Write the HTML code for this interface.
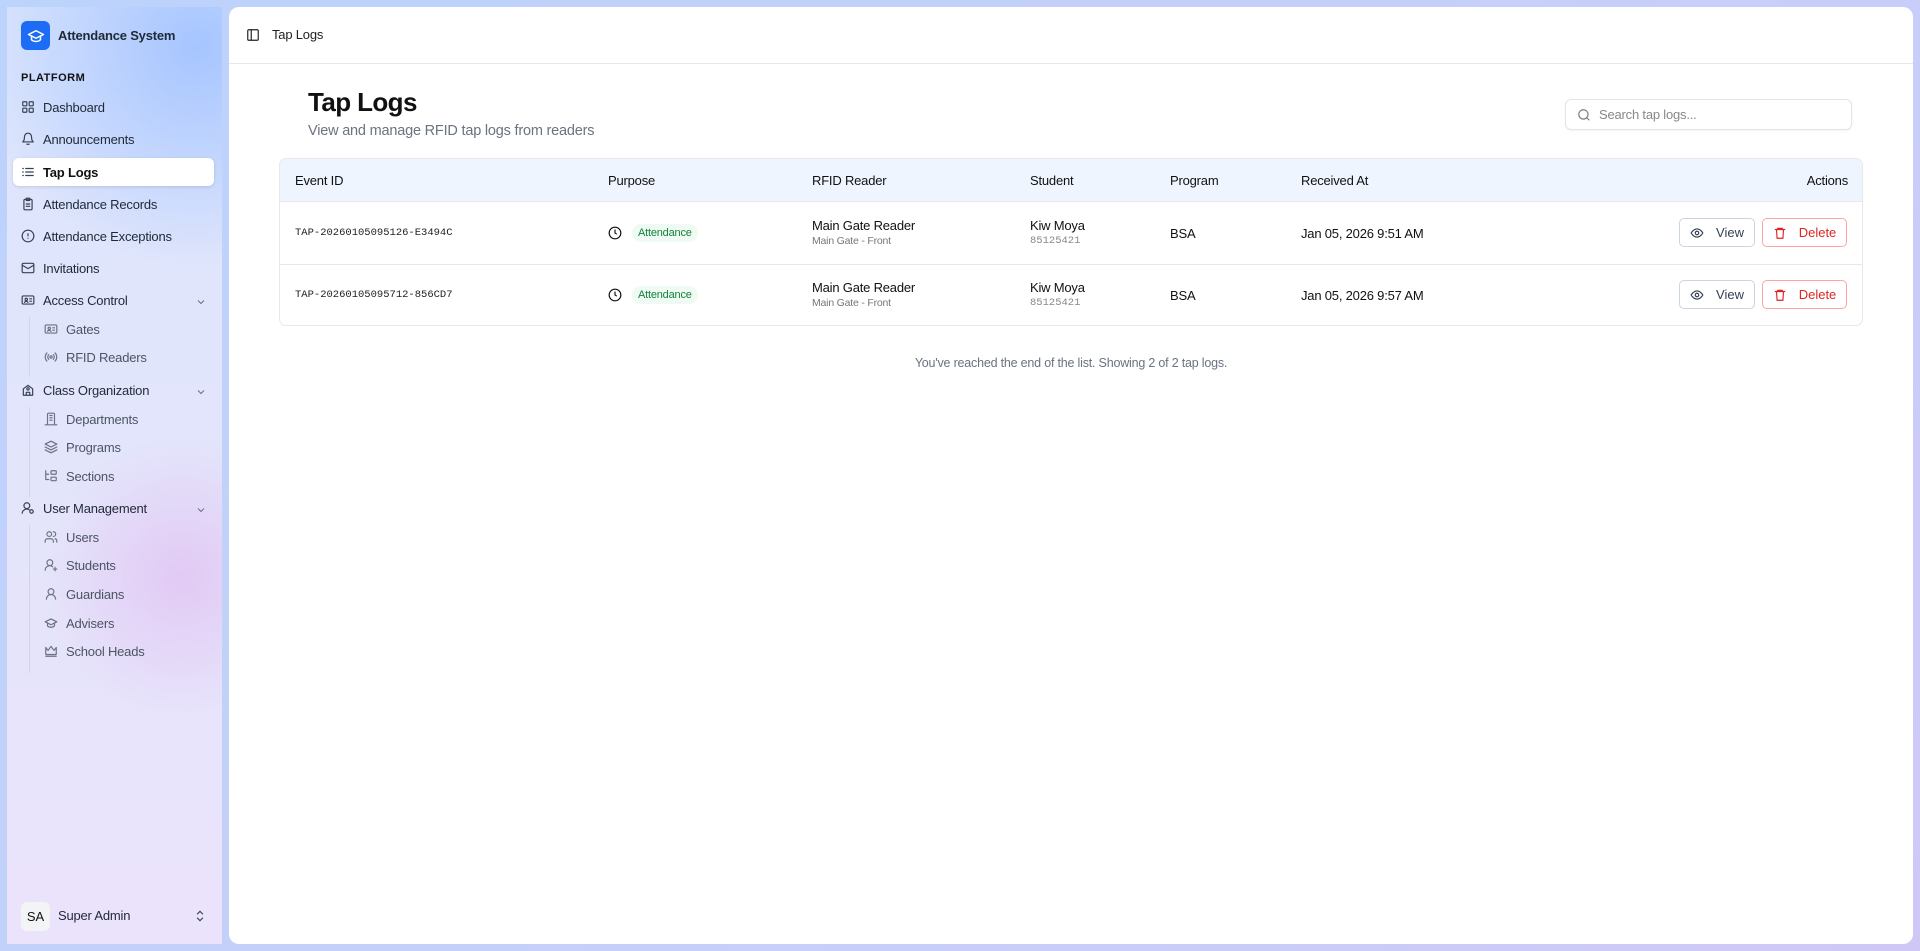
<!DOCTYPE html>
<html><head><meta charset="utf-8"><style>
*{box-sizing:border-box;margin:0;padding:0}
body{width:1920px;height:951px;overflow:hidden;font-family:"Liberation Sans",sans-serif;color:#111;background:linear-gradient(135deg,#bcd3fb 0%,#c7cffa 60%,#cfc8f6 100%);position:relative}
.sb{position:absolute;left:7px;top:7px;width:215px;height:937px;background:radial-gradient(circle at 175px 570px,rgba(226,200,244,.95),rgba(226,200,244,0) 140px),radial-gradient(circle at 190px 40px,#a6c5ff,rgba(166,197,255,0) 220px),linear-gradient(180deg,#dbe5fd 0%,#e3e5fb 50%,#ebe3fb 100%)}
.ab{position:absolute;font-size:13px;white-space:nowrap;letter-spacing:-.2px}
.it{position:absolute;left:6px;width:201px;height:28px;font-size:13px;letter-spacing:-.2px;color:#1f2937;display:flex;align-items:center;padding-left:8px}
.it svg{width:14px;height:14px;margin-right:8px;stroke:#374151;fill:none;stroke-width:2;stroke-linecap:round;stroke-linejoin:round}
.sub{position:absolute;left:30px;height:26px;font-size:13px;letter-spacing:-.2px;color:#4b5563;display:flex;align-items:center;padding-left:7px}
.sub svg{width:14px;height:14px;margin-right:8px;stroke:#6b7280;fill:none;stroke-width:2;stroke-linecap:round;stroke-linejoin:round}
.chev{position:absolute;left:188px;width:12px;height:12px;stroke:#6b7280;fill:none;stroke-width:2}
.main{position:absolute;left:229px;top:7px;width:1684px;height:937px;background:#fff;border-radius:10px}
.th{position:absolute;top:0;height:43px;line-height:43px;font-size:13px;letter-spacing:-.2px;color:#111}
.mono{font-family:"Liberation Mono",monospace;letter-spacing:0}
.btn{position:absolute;height:29px;border-radius:5px;font-size:13px;display:flex;align-items:center;justify-content:center;gap:12px;background:#fff}
</style></head><body>
<div class="sb">
  <div style="position:absolute;left:14px;top:14px;width:29px;height:29px;border-radius:6px;background:#1d6cf5;display:flex;align-items:center;justify-content:center"><svg width="18" height="18" viewBox="0 0 24 24" fill="none" stroke="#fff" stroke-width="2" stroke-linecap="round" stroke-linejoin="round"><path d="M22 10 12 5 2 10l10 5 10-5z"/><path d="M6 12v5c3 3 9 3 12 0v-5"/></svg></div>
  <div class="ab" style="left:51px;top:21px;font-weight:bold;font-size:13px;color:#1f2937">Attendance System</div>
  <div class="ab" style="left:14px;top:65px;font-size:11px;font-weight:bold;letter-spacing:.5px;color:#111">PLATFORM</div>
  <div class="it" style="top:86px"><svg viewBox="0 0 24 24"><rect x="3" y="3" width="7" height="7" rx="1"/><rect x="14" y="3" width="7" height="7" rx="1"/><rect x="3" y="14" width="7" height="7" rx="1"/><rect x="14" y="14" width="7" height="7" rx="1"/></svg>Dashboard</div>
  <div class="it" style="top:118px"><svg viewBox="0 0 24 24"><path d="M6 8a6 6 0 0 1 12 0c0 7 3 9 3 9H3s3-2 3-9"/><path d="M10 21h4"/></svg>Announcements</div>
  <div class="it" style="top:151px;background:#fff;border-radius:6px;box-shadow:0 1px 3px rgba(0,0,0,.12);font-weight:bold;color:#111"><svg viewBox="0 0 24 24"><path d="M3 6h1M3 12h1M3 18h1M8 6h13M8 12h13M8 18h13"/></svg>Tap Logs</div>
  <div class="it" style="top:183px"><svg viewBox="0 0 24 24"><rect x="5" y="4" width="14" height="18" rx="2"/><path d="M9 2h6v4H9zM9 12h6M9 16h6"/></svg>Attendance Records</div>
  <div class="it" style="top:215px"><svg viewBox="0 0 24 24"><circle cx="12" cy="12" r="10"/><path d="M12 8v4M12 16h.01"/></svg>Attendance Exceptions</div>
  <div class="it" style="top:247px"><svg viewBox="0 0 24 24"><rect x="2" y="4" width="20" height="16" rx="2"/><path d="m22 7-10 6L2 7"/></svg>Invitations</div>
  <div class="it" style="top:279px"><svg viewBox="0 0 24 24"><rect x="2" y="5" width="20" height="14" rx="2"/><circle cx="9" cy="11" r="2"/><path d="M6 16c1-2 5-2 6 0M15 10h3M15 14h3"/></svg>Access Control</div>
  <svg class="chev" style="top:289px" viewBox="0 0 24 24"><path d="m6 9 6 6 6-6"/></svg>
  <div style="position:absolute;left:22px;top:310px;width:1px;height:60px;background:#cfd6ea"></div>
  <div class="sub" style="top:309px"><svg viewBox="0 0 24 24"><rect x="2" y="5" width="20" height="14" rx="2"/><circle cx="9" cy="11" r="2"/><path d="M6 16c1-2 5-2 6 0M15 10h3M15 14h3"/></svg>Gates</div>
  <div class="sub" style="top:337px"><svg viewBox="0 0 24 24"><circle cx="12" cy="12" r="2"/><path d="M8 8a6 6 0 0 0 0 8M16 8a6 6 0 0 1 0 8M5 5a10 10 0 0 0 0 14M19 5a10 10 0 0 1 0 14"/></svg>RFID Readers</div>
  <div class="it" style="top:369px"><svg viewBox="0 0 24 24"><path d="M4 21V10l8-6 8 6v11zM9 21v-5h6v5"/><circle cx="12" cy="10" r="2"/></svg>Class Organization</div>
  <svg class="chev" style="top:379px" viewBox="0 0 24 24"><path d="m6 9 6 6 6-6"/></svg>
  <div style="position:absolute;left:22px;top:400px;width:1px;height:90px;background:#cfd6ea"></div>
  <div class="sub" style="top:399px"><svg viewBox="0 0 24 24"><path d="M6 22V4a2 2 0 0 1 2-2h8a2 2 0 0 1 2 2v18zM2 22h20M10 6h4M10 10h4M10 14h4"/></svg>Departments</div>
  <div class="sub" style="top:427px"><svg viewBox="0 0 24 24"><path d="m12 2 10 5-10 5L2 7z"/><path d="m2 12 10 5 10-5M2 17l10 5 10-5"/></svg>Programs</div>
  <div class="sub" style="top:456px"><svg viewBox="0 0 24 24"><path d="M3 3v15h5M3 9h5"/><rect x="12" y="3" width="9" height="6" rx="1"/><rect x="12" y="14" width="9" height="6" rx="1"/></svg>Sections</div>
  <div class="it" style="top:487px"><svg viewBox="0 0 24 24"><circle cx="10" cy="8" r="5"/><path d="M2 21a8 8 0 0 1 12-6"/><circle cx="18" cy="18" r="3"/></svg>User Management</div>
  <svg class="chev" style="top:497px" viewBox="0 0 24 24"><path d="m6 9 6 6 6-6"/></svg>
  <div style="position:absolute;left:22px;top:518px;width:1px;height:148px;background:#cfd6ea"></div>
  <div class="sub" style="top:517px"><svg viewBox="0 0 24 24"><circle cx="9" cy="7" r="4"/><path d="M2 21v-2a4 4 0 0 1 4-4h6a4 4 0 0 1 4 4v2M16 3a4 4 0 0 1 0 8M22 21v-2a4 4 0 0 0-3-4"/></svg>Users</div>
  <div class="sub" style="top:545px"><svg viewBox="0 0 24 24"><circle cx="10" cy="8" r="5"/><path d="M2 21a8 8 0 0 1 13-6M19 16v6M16 19h6"/></svg>Students</div>
  <div class="sub" style="top:574px"><svg viewBox="0 0 24 24"><circle cx="12" cy="8" r="5"/><path d="M20 21a8 8 0 0 0-16 0"/></svg>Guardians</div>
  <div class="sub" style="top:603px"><svg viewBox="0 0 24 24"><path d="M22 10 12 5 2 10l10 5 10-5z"/><path d="M6 12v5c3 3 9 3 12 0v-5"/></svg>Advisers</div>
  <div class="sub" style="top:631px"><svg viewBox="0 0 24 24"><path d="M3 6l4 5 5-7 5 7 4-5v12H3zM3 21h18"/></svg>School Heads</div>
  <div style="position:absolute;left:14px;top:895px;width:29px;height:29px;border-radius:6px;background:#f3f4f6;font-size:13px;display:flex;align-items:center;justify-content:center;color:#111">SA</div>
  <div class="ab" style="left:51px;top:901px;color:#1f2937">Super Admin</div>
  <svg style="position:absolute;left:186px;top:902px" width="14" height="14" viewBox="0 0 24 24" fill="none" stroke="#374151" stroke-width="2"><path d="m7 15 5 5 5-5M7 9l5-5 5 5"/></svg>
</div>

<div class="main">
  <svg style="position:absolute;left:17px;top:21px" width="14" height="14" viewBox="0 0 24 24" fill="none" stroke="#222" stroke-width="2"><rect x="3" y="3" width="18" height="18" rx="2"/><path d="M9 3v18"/></svg>
  <div class="ab" style="left:43px;top:20px;font-size:13px;color:#222">Tap Logs</div>
  <div style="position:absolute;left:0;top:56px;width:100%;height:1px;background:#e8e8ec"></div>
  <div class="ab" style="left:79px;top:80px;font-size:26px;font-weight:bold;letter-spacing:-.6px">Tap Logs</div>
  <div class="ab" style="left:79px;top:116px;font-size:14.5px;color:#6b7280">View and manage RFID tap logs from readers</div>
  <div style="position:absolute;left:1336px;top:92px;width:287px;height:31px;border:1px solid #e2e4e8;border-radius:6px;box-shadow:0 1px 2px rgba(0,0,0,.05)">
    <svg style="position:absolute;left:11px;top:8px" width="14" height="14" viewBox="0 0 24 24" fill="none" stroke="#777" stroke-width="2"><circle cx="11" cy="11" r="8"/><path d="m21 21-4.3-4.3"/></svg>
    <div class="ab" style="left:33px;top:7px;font-size:13px;color:#888">Search tap logs...</div>
  </div>
  <div style="position:absolute;left:50px;top:151px;width:1584px;height:168px;border:1px solid #e6e8ec;border-radius:7px;overflow:hidden">
    <div style="position:absolute;left:0;top:0;width:100%;height:43px;background:#eef5ff;border-bottom:1px solid #e6e8ec"></div>
    <div class="th" style="left:15px">Event ID</div>
    <div class="th" style="left:328px">Purpose</div>
    <div class="th" style="left:532px">RFID Reader</div>
    <div class="th" style="left:750px">Student</div>
    <div class="th" style="left:890px">Program</div>
    <div class="th" style="left:1021px">Received At</div>
    <div class="th" style="right:14px">Actions</div>
    <div style="position:absolute;left:0;top:105px;width:100%;height:1px;background:#e6e8ec"></div>
    <div class="ab mono" style="left:15px;top:68px;font-size:10.5px;color:#222">TAP-20260105095126-E3494C</div>
    <div class="ab mono" style="left:15px;top:130px;font-size:10.5px;color:#222">TAP-20260105095712-856CD7</div>
    <svg style="position:absolute;left:328px;top:67px" width="14" height="14" viewBox="0 0 24 24" fill="none" stroke="#111" stroke-width="2"><circle cx="12" cy="12" r="10"/><path d="M12 6v6l3 2"/></svg>
    <div class="ab" style="left:352px;top:65px;padding:3px 6px;border-radius:9px;background:#effbf2;color:#15803d;font-size:11px">Attendance</div>
    <svg style="position:absolute;left:328px;top:129px" width="14" height="14" viewBox="0 0 24 24" fill="none" stroke="#111" stroke-width="2"><circle cx="12" cy="12" r="10"/><path d="M12 6v6l3 2"/></svg>
    <div class="ab" style="left:352px;top:127px;padding:3px 6px;border-radius:9px;background:#effbf2;color:#15803d;font-size:11px">Attendance</div>
    <div class="ab" style="left:532px;top:59px">Main Gate Reader</div>
    <div class="ab" style="left:532px;top:76px;font-size:10.5px;color:#777">Main Gate - Front</div>
    <div class="ab" style="left:532px;top:121px">Main Gate Reader</div>
    <div class="ab" style="left:532px;top:138px;font-size:10.5px;color:#777">Main Gate - Front</div>
    <div class="ab" style="left:750px;top:59px">Kiw Moya</div>
    <div class="ab mono" style="left:750px;top:76px;font-size:10.5px;color:#888">85125421</div>
    <div class="ab" style="left:750px;top:121px">Kiw Moya</div>
    <div class="ab mono" style="left:750px;top:138px;font-size:10.5px;color:#888">85125421</div>
    <div class="ab" style="left:890px;top:67px">BSA</div>
    <div class="ab" style="left:890px;top:129px">BSA</div>
    <div class="ab" style="left:1021px;top:67px">Jan 05, 2026 9:51 AM</div>
    <div class="ab" style="left:1021px;top:129px">Jan 05, 2026 9:57 AM</div>
    <div class="btn" style="left:1399px;top:59px;width:76px;border:1px solid #cbd5e1;color:#334155"><svg width="14" height="14" viewBox="0 0 24 24" fill="none" stroke="#334155" stroke-width="2"><path d="M2 12s4-7 10-7 10 7 10 7-4 7-10 7S2 12 2 12z"/><circle cx="12" cy="12" r="3"/></svg>View</div>
    <div class="btn" style="left:1482px;top:59px;width:85px;border:1px solid #fca5a5;color:#dc2626"><svg width="14" height="14" viewBox="0 0 24 24" fill="none" stroke="#dc2626" stroke-width="2"><path d="M3 6h18M8 6V4h8v2M6 6l1 15h10l1-15"/></svg>Delete</div>
    <div class="btn" style="left:1399px;top:121px;width:76px;border:1px solid #cbd5e1;color:#334155"><svg width="14" height="14" viewBox="0 0 24 24" fill="none" stroke="#334155" stroke-width="2"><path d="M2 12s4-7 10-7 10 7 10 7-4 7-10 7S2 12 2 12z"/><circle cx="12" cy="12" r="3"/></svg>View</div>
    <div class="btn" style="left:1482px;top:121px;width:85px;border:1px solid #fca5a5;color:#dc2626"><svg width="14" height="14" viewBox="0 0 24 24" fill="none" stroke="#dc2626" stroke-width="2"><path d="M3 6h18M8 6V4h8v2M6 6l1 15h10l1-15"/></svg>Delete</div>
  </div>
  <div class="ab" style="left:0;width:1684px;text-align:center;top:349px;font-size:12.5px;color:#6b7280">You've reached the end of the list. Showing 2 of 2 tap logs.</div>
</div>
</body></html>
